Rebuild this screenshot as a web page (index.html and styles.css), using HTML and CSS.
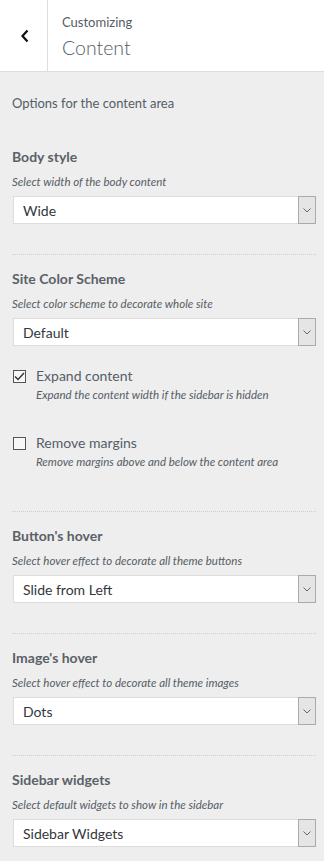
FILE: index.html
```html
<!DOCTYPE html>
<html lang="en">
<head>
    <meta charset="UTF-8">
    <meta name="viewport" content="width=device-width, initial-scale=1.0">
    <title>Customizing Content</title>
    <link rel="stylesheet" href="styles.css">
</head>
<body>

    <!-- Panel header -->
    <header class="panel-head">
        <button class="back-btn" aria-label="Back">
            <svg width="10" height="14" viewBox="0 0 10 14"><path d="M7.5 1.5 L2.5 7 L7.5 12.5" fill="none" stroke="#111" stroke-width="2.2"/></svg>
        </button>
        <div class="head-title">
            <span class="action">Customizing</span>
            <h1>Content</h1>
        </div>
    </header>

    <!-- Controls -->
    <main class="panel-body">
        <p class="panel-desc">Options for the content area</p>

        <section class="control first">
            <h2>Body style</h2>
            <p class="hint">Select width of the body content</p>
            <div class="select"><span>Wide</span><i class="arrow"><svg width="8" height="5" viewBox="0 0 8 5"><path d="M0.5 0.5 L4 4 L7.5 0.5" fill="none" stroke="#666" stroke-width="1"/></svg></i></div>
        </section>

        <section class="control">
            <h2>Site Color Scheme</h2>
            <p class="hint">Select color scheme to decorate whole site</p>
            <div class="select"><span>Default</span><i class="arrow"><svg width="8" height="5" viewBox="0 0 8 5"><path d="M0.5 0.5 L4 4 L7.5 0.5" fill="none" stroke="#666" stroke-width="1"/></svg></i></div>

            <label class="check">
                <span class="box checked"><svg width="11" height="9" viewBox="0 0 11 9"><path d="M1 4.5 L4 7.5 L10 1" fill="none" stroke="#333" stroke-width="1.4"/></svg></span>
                <span class="check-text">Expand content</span>
            </label>
            <p class="hint indent">Expand the content width if the sidebar is hidden</p>

            <label class="check second">
                <span class="box"></span>
                <span class="check-text">Remove margins</span>
            </label>
            <p class="hint indent">Remove margins above and below the content area</p>
        </section>

        <section class="control">
            <h2>Button's hover</h2>
            <p class="hint">Select hover effect to decorate all theme buttons</p>
            <div class="select"><span>Slide from Left</span><i class="arrow"><svg width="8" height="5" viewBox="0 0 8 5"><path d="M0.5 0.5 L4 4 L7.5 0.5" fill="none" stroke="#666" stroke-width="1"/></svg></i></div>
        </section>

        <section class="control">
            <h2>Image's hover</h2>
            <p class="hint">Select hover effect to decorate all theme images</p>
            <div class="select"><span>Dots</span><i class="arrow"><svg width="8" height="5" viewBox="0 0 8 5"><path d="M0.5 0.5 L4 4 L7.5 0.5" fill="none" stroke="#666" stroke-width="1"/></svg></i></div>
        </section>

        <section class="control">
            <h2>Sidebar widgets</h2>
            <p class="hint">Select default widgets to show in the sidebar</p>
            <div class="select"><span>Sidebar Widgets</span><i class="arrow"><svg width="8" height="5" viewBox="0 0 8 5"><path d="M0.5 0.5 L4 4 L7.5 0.5" fill="none" stroke="#666" stroke-width="1"/></svg></i></div>
        </section>
    </main>

</body>
</html>
```

FILE: styles.css
```css
/* Colors */
:root {
    --panel-bg: #eeeeee;
    --text: #555d66;
    --border: #dddddd;
}

* {
    margin: 0;
    padding: 0;
    box-sizing: border-box;
    font-family: 'Lato', 'Open Sans', sans-serif;
}

body {
    background-color: var(--panel-bg);
    color: var(--text);
    width: 324px;
    min-height: 861px;
}

/* Header */
.panel-head {
    display: flex;
    height: 72px;
    background: white;
    border-bottom: 1px solid var(--border);
}

.back-btn {
    width: 48px;
    border: none;
    border-right: 1px solid var(--border);
    background: white;
    display: flex;
    align-items: center;
    justify-content: center;
    padding-left: 2px;
}

.head-title {
    padding: 14px 0 0 14px;
}

.head-title .action {
    display: block;
    font-size: 13px;
    line-height: 16px;
    color: #555d66;
}

.head-title h1 {
    font-size: 19.5px;
    font-weight: 300;
    line-height: 26px;
    margin-top: 5px;
    color: #555d66;
}

/* Body */
.panel-body {
    padding: 0 8px 0 12px;
}

.panel-desc {
    font-size: 13px;
    line-height: 18px;
    margin-top: 22px;
}

.control {
    border-top: 1px dotted #cfcfcf;
    padding: 14px 0 30px;
}

.control.first {
    border-top: none;
    padding-top: 35px;
}

.control h2 {
    font-size: 14px;
    font-weight: 700;
    line-height: 20px;
    color: #5a6168;
}

.hint {
    font-size: 11.5px;
    font-style: italic;
    line-height: 16px;
    margin-top: 7px;
}

.hint.indent {
    margin: 1px 0 0 24px;
}

/* Select box */
.select {
    display: flex;
    height: 28px;
    margin-top: 6px;
    margin-left: 1px;
    background: white;
    border: 1px solid var(--border);
    align-items: center;
}

.select span {
    flex: 1;
    font-size: 14px;
    padding-left: 9px;
    color: #32373c;
}

.select .arrow {
    width: 18px;
    height: 28px;
    margin: -1px -1px -1px 0;
    background: #e5e5e5;
    border: 1px solid #aaaaaa;
    display: flex;
    align-items: center;
    justify-content: center;
}

/* Checkboxes */
.check {
    display: flex;
    align-items: center;
    gap: 10px;
    margin-top: 20px;
    line-height: 20px;
}

.check.second {
    margin-top: 30px;
}

.box {
    width: 13px;
    height: 13px;
    margin-left: 1px;
    border: 1px solid #555;
    background: #f7f7f7;
    display: flex;
    align-items: center;
    justify-content: center;
}

.check-text {
    font-size: 14px;
}

.control:has(.check) {
    padding-bottom: 41px;
}
```
